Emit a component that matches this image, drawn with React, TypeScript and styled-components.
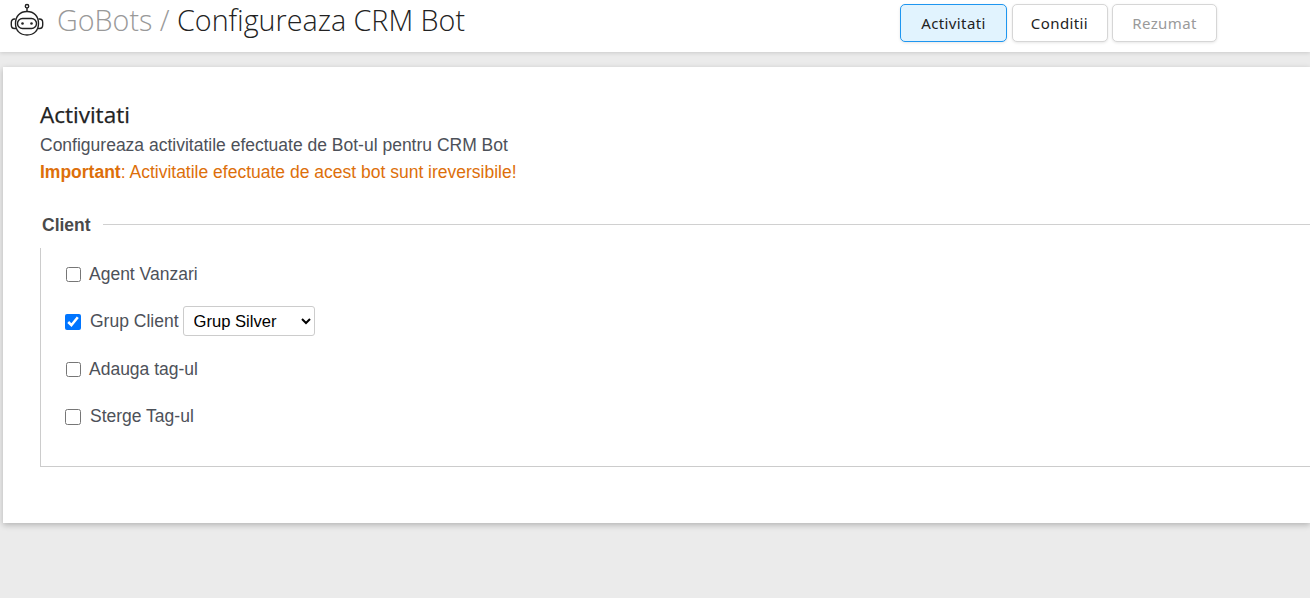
import React from 'react';
import styled, { createGlobalStyle } from 'styled-components';

const GlobalStyle = createGlobalStyle`
html {
  overflow: hidden;
}
body {
  margin: 0;
  padding: 0;
  background: #ebebeb;
}
* { box-sizing: border-box; }
`;

const activities = [
    { label: 'Agent Vanzari', checked: false },
    { label: 'Grup Client', checked: true, select: true },
    { label: 'Adauga tag-ul', checked: false },
    { label: 'Sterge Tag-ul', checked: false, large: true },
];

function RobotIcon() {
    return (
        <svg width="36" height="36" viewBox="0 0 36 36" fill="none" stroke="#222" strokeWidth="1.4">
            <circle cx="18" cy="4.2" r="1.7" />
            <path d="M18 6V9.500" />
            <path d="M6.500 21.500C6.500 14 11 9.500 18 9.500S29.500 14 29.500 21.500C29.500 28.500 25 33 18 33S6.500 28.500 6.500 21.500z" />
            <rect x="8.500" y="16.500" width="19" height="10" rx="5" />
            <circle cx="13.500" cy="21.500" r="1.300" fill="#222" stroke="none" />
            <circle cx="22.500" cy="21.500" r="1.300" fill="#222" stroke="none" />
            <path d="M6.500 17H5.500C3.500 17 2.300 18.500 2.300 20.500v2.500C2.300 25 3.500 26.500 5.500 26.500H7" />
            <path d="M29.500 17H30.500C32.500 17 33.700 18.500 33.700 20.500v2.500C33.700 25 32.500 26.500 30.500 26.500H29" />
        </svg>
    );
}

export default function App() {
    return (
        <Page>
            <GlobalStyle />
            <Header>
                <Brand>
                    <RobotIcon />
                    <Title><Muted>GoBots /</Muted> Configureaza CRM Bot</Title>
                </Brand>
                <Steps>
                    <StepButton $active $width={107}>Activitati</StepButton>
                    <StepButton $width={96}>Conditii</StepButton>
                    <StepButton $disabled $width={105}>Rezumat</StepButton>
                </Steps>
            </Header>
            <Card>
                <Heading>Activitati</Heading>
                <Description>Configureaza activitatile efectuate de Bot-ul pentru CRM Bot</Description>
                <Warning><b>Important</b>: Activitatile efectuate de acest bot sunt ireversibile!</Warning>
                <SectionTitle><span>Client</span></SectionTitle>
                <Options>
                    {activities.map((item) => (
                        <Option key={item.label}>
                            <Check type="checkbox" defaultChecked={item.checked} $large={item.large || item.select} />
                            <OptionLabel>{item.label}</OptionLabel>
                            {item.select && (
                                <GroupSelect defaultValue="silver">
                                    <option value="silver">Grup Silver</option>
                                    <option value="gold">Grup Gold</option>
                                </GroupSelect>
                            )}
                        </Option>
                    ))}
                </Options>
            </Card>
        </Page>
    );
}

const Page = styled.div`
min-height: 100vh;
background: #ebebeb;
`;

const Header = styled.header`
height: 52px;
background: #fff;
box-shadow: 0 1px 4px rgba(0, 0, 0, 0.14);
position: relative;
display: flex;
justify-content: space-between;
align-items: flex-start;
padding: 2px 93px 0 9px;
`;

const Brand = styled.div`
display: flex;
align-items: center;
gap: 12px;
height: 36px;
`;

const Title = styled.h1`
margin: 0;
font: 300 28.700px/36px "Open Sans", sans-serif;
color: #222;
`;

const Muted = styled.span`
color: #999;
`;

const Steps = styled.div`
display: flex;
gap: 4.500px;
padding-top: 2px;
`;

const StepButton = styled.button<{ $active?: boolean; $disabled?: boolean; $width: number }>`
width: ${(p) => p.$width}px;
height: 38px;
padding: 0;
border-radius: 5px;
border: 1px solid ${(p) => (p.$active ? '#1e96f0' : '#d6d6d6')};
background: ${(p) => (p.$active ? '#e1f3fe' : '#fff')};
color: ${(p) => (p.$disabled ? '#9a9a9a' : '#222')};
font: 400 15px "Noto Sans", sans-serif;
letter-spacing: 0.4px;
box-shadow: 0 1px 3px rgba(0, 0, 0, 0.1);
`;

const Card = styled.main`
margin: 15px 0 0 3px;
height: 456px;
background: #fff;
box-shadow: 0 2px 6px rgba(0, 0, 0, 0.24);
padding: 34px 0 0 37px;
`;

const Heading = styled.h2`
margin: 0;
font: 500 22.500px/28px "Open Sans", sans-serif;
-webkit-text-stroke: 0.25px #222;
color: #222;
`;

const Description = styled.p`
margin: 3px 0 0;
font: 400 17.500px/27px "Liberation Sans", sans-serif;
color: #4d5159;
`;

const Warning = styled.p`
margin: 0;
font: 400 17.500px/27px "Liberation Sans", sans-serif;
color: #dd6f0a;
`;

const SectionTitle = styled.div`
margin-top: 28px;
display: flex;
align-items: center;
gap: 12px;
padding-left: 2px;
font: 700 17.500px/23px "Liberation Sans", sans-serif;
color: #4a4a4a;
&::after {
  content: '';
  flex: 1;
  height: 1px;
  margin-top: -3px;
  background: #d0d0d0;
}
`;

const Options = styled.div`
margin-top: 11px;
height: 219px;
border-left: 1px solid #ccc;
border-bottom: 1px solid #ccc;
padding: 2.400px 0 0 24px;
display: flex;
flex-direction: column;
`;

const Option = styled.label`
height: 47.500px;
display: flex;
align-items: center;
`;

const Check = styled.input<{ $large?: boolean }>`
margin: 0;
width: ${(p) => (p.$large ? '16px' : '15px')};
height: ${(p) => (p.$large ? '16px' : '15px')};
margin-left: ${(p) => (p.$large ? '0' : '1px')};
margin-right: ${(p) => (p.$large ? '0' : '-1px')};
`;

const OptionLabel = styled.span`
margin-left: 9px;
font: 400 17.500px "Liberation Sans", sans-serif;
color: #4d5159;
`;

const GroupSelect = styled.select`
margin: -1px 0 0 4px;
width: 132px;
height: 30px;
padding: 0 6px;
font: 400 16.600px "Liberation Sans", sans-serif;
color: #000;
background: #fff;
border: 1px solid #ccc;
border-radius: 3px;
`;
